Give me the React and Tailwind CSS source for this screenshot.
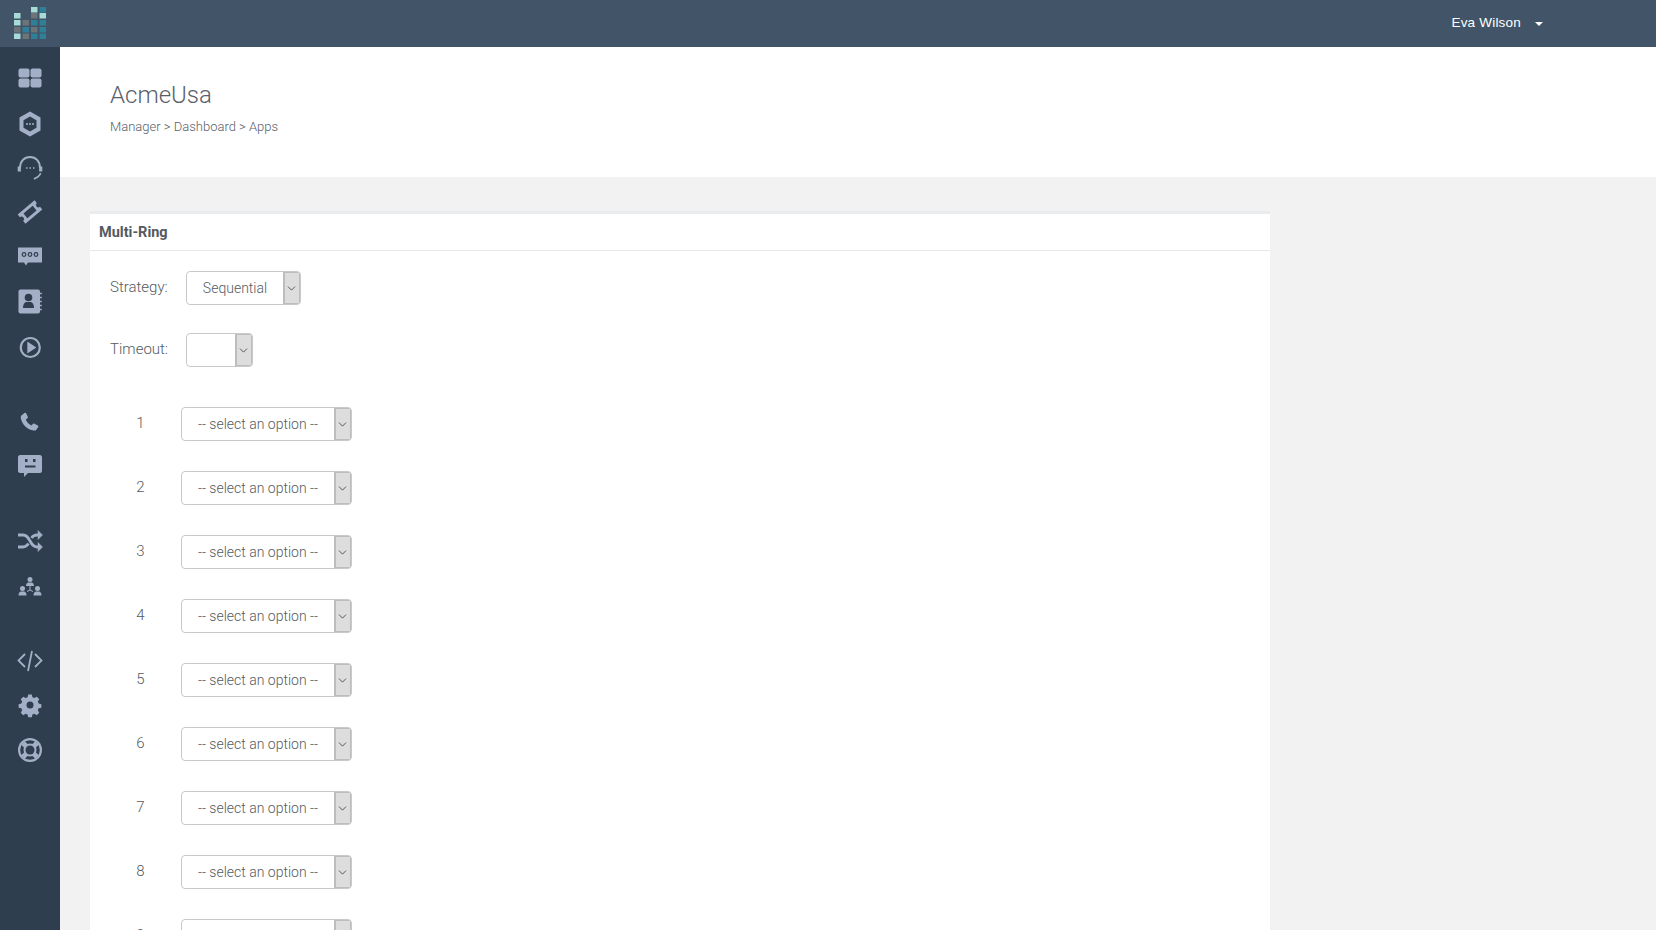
import { ChevronDown } from "lucide-react";

const light = "#a6dbd8";
const gray = "#6e7378";
const teal = "#2f7f96";

const logoCells = [
  [14, 13, light], [14, 20, light], [14, 27, gray], [14, 33.5, light],
  [22.5, 20, gray], [22.5, 27, teal], [22.5, 33.5, gray],
  [31, 7, light], [31, 13, gray], [31, 20, teal], [31, 27, gray], [31, 33.5, teal],
  [39.5, 7, teal], [39.5, 13, light], [39.5, 20, teal], [39.5, 27, teal], [39.5, 33.5, teal],
];

function Logo() {
  return (
    <svg width="60" height="47" viewBox="0 0 60 47">
      {logoCells.map(([x, y, fill]) => (
        <rect key={`${x}-${y}`} x={x} y={y} width="6.5" height="5.5" fill={fill} />
      ))}
    </svg>
  );
}

const C = "#a3afc6";
const BG = "#2f3e4e";

const icons = [
  // dashboard tiles
  <g key="a" fill={C} transform="translate(0.5 0.500)">
    <rect x="3" y="4" width="11" height="9" rx="2" /><rect x="15" y="4" width="11" height="9" rx="2" />
    <rect x="3" y="14" width="11" height="9" rx="2" /><rect x="15" y="14" width="11" height="9" rx="2" />
  </g>,
  // hexagon
  <g key="b" transform="translate(0.500 1)">
    <path d="M14.500 1.500 25 7.500v13l-10.500 6L4 20.500v-13z" fill={C} />
    <path d="M14.500 6.500 21 10.200v7.600L14.500 21.500 8 17.800v-7.600z" fill={BG} />
    <circle cx="11.500" cy="14" r="1" fill={C} /><circle cx="14.500" cy="14" r="1" fill={C} /><circle cx="17.500" cy="14" r="1" fill={C} />
  </g>,
  // headset
  <g key="c" fill="none" stroke={C} transform="translate(0.500 -1)">
    <path d="M4.500 15C4.500 8 9 4 14.500 4S24.500 8 24.500 15" strokeWidth="2" />
    <path d="M3.800 13.500v5M25.200 13.500v5" strokeWidth="3.200" />
    <path d="M25 20c0 2-2 3-3 4l-3.500 2" strokeWidth="1.600" />
    <path d="M10.500 15h1.500M14 15h1.500M17.500 15h1.500" strokeWidth="1.500" />
  </g>,
  // ticket
  <g key="d" transform="rotate(-40 15 13)">
    <path d="M4 7h22v3.500a2.500 2.500 0 0 0 0 5V19H4v-3.500a2.500 2.500 0 0 0 0-5z" fill={C} />
    <rect x="9" y="10" width="12" height="6" fill={BG} />
  </g>,
  // chat dots
  <g key="e" transform="translate(0 -1.500)">
    <path d="M3 5h24v15H13l-2 3-2-3H3z" fill={C} />
    <circle cx="9" cy="12" r="1.800" fill="none" stroke={BG} strokeWidth="1.200" />
    <circle cx="15" cy="12" r="1.800" fill="none" stroke={BG} strokeWidth="1.200" />
    <circle cx="21" cy="12" r="1.800" fill="none" stroke={BG} strokeWidth="1.200" />
  </g>,
  // address book
  <g key="f" transform="translate(0 -2)">
    <rect x="3.500" y="2.500" width="21.500" height="24" rx="2" fill={C} />
    <path d="M25 6.500h1.800M25 10.500h1.800M25 14.500h1.800M25 18.500h1.800M25 22.500h1.800" stroke={C} strokeWidth="1.500" />
    <circle cx="13.500" cy="10.500" r="3.800" fill={BG} />
    <path d="M8 21c0-4 2-6 3.500-6h4c1.500 0 3.500 2 3.500 6z" fill={BG} />
  </g>,
  // play circle
  <g key="g" transform="translate(0.300 -1)">
    <circle cx="15" cy="14.500" r="9.500" fill="none" stroke={C} strokeWidth="2.200" />
    <path d="M12 8.500 21 14.500 12 20.500z" fill={C} />
  </g>,
  // phone
  <path key="h" transform="translate(0 1.500)" d="M7 5.500 9.500 3.500c.7-.5 1.300-.3 1.600.3l1.700 3.400c.3.600.2 1.100-.3 1.500l-1.700 1.300c1 2.500 3 4.700 5.500 6l1.600-1.600c.5-.5 1-.5 1.600-.2l3.300 1.900c.6.4.7 1 .3 1.600l-1.800 2.500c-.6.800-1.500 1.100-2.600.8C12.500 20.500 7 15 5.800 8.500c-.2-1.300.3-2.300 1.200-3z" fill={C} />,
  // chat face
  <g key="i" transform="translate(0 -1.500)">
    <path d="M5 3.500h20c1 0 2 1 2 2v14c0 1-1 2-2 2H13l-4 4v-4H5c-1 0-2-1-2-2v-14c0-1 1-2 2-2z" fill={C} />
    <rect x="10" y="7.500" width="2.500" height="3" fill={BG} /><rect x="18" y="7.500" width="2.500" height="3" fill={BG} />
    <rect x="10" y="14" width="10.500" height="2" fill={BG} />
  </g>,
  // shuffle
  <g key="j" fill="none" stroke={C} strokeWidth="2.800">
    <path d="M3 8h5c4 0 5 2.500 7 6s3.500 6 7 6h2" />
    <path d="M3 20h5c3 0 4.500-2 5.500-3.500M16.500 11c1-1.500 2.500-3 5.500-3h2" />
    <path d="M23 3.500l4.500 4.500-4.500 4.500zM23 15.500l4.500 4.500-4.500 4.500z" fill={C} strokeWidth="0.500" />
  </g>,
  // org people
  <g key="k" fill={C} transform="translate(0 0.500)">
    <circle cx="15" cy="7" r="2.500" /><path d="M11 13.500c0-2.500 1.500-3.500 2.500-3.500h3c1 0 2.500 1 2.500 3.500z" />
    <circle cx="7.500" cy="16" r="2.500" /><path d="M3.500 23c0-3 1.500-4 2.500-4h3c1 0 2.500 1 2.500 4z" />
    <circle cx="22.500" cy="16" r="2.500" /><path d="M18.500 23c0-3 1.500-4 2.500-4h3c1 0 2.500 1 2.500 4z" />
    <path d="M15 13.500v4l-3 1.500M15 17.500l3 1.500" fill="none" stroke={C} strokeWidth="1" />
  </g>,
  // code
  <g key="l" fill="none" stroke={C} strokeWidth="1.800" transform="translate(0 0.500)">
    <path d="M10 7.500 3.500 14 10 20.500M20 7.500 26.500 14 20 20.500M17 4.500l-4 20" />
  </g>,
  // gear
  <g key="m" transform="translate(0 -0.500)">
    <path d="M13 3h4l.7 3 2.200.9 2.600-1.600 2.800 2.800-1.600 2.600.9 2.200 3 .7v4l-3 .7-.9 2.200 1.600 2.600-2.800 2.800-2.600-1.600-2.200.9-.7 3h-4l-.7-3-2.200-.9-2.600 1.600-2.800-2.800 1.600-2.600-.9-2.200-3-.7v-4l3-.7.9-2.200-1.600-2.600 2.800-2.800 2.600 1.600 2.200-.9z" fill={C} transform="translate(1.500 1.400) scale(0.9)" />
    <circle cx="15" cy="14.500" r="3.500" fill={BG} />
  </g>,
  // lifebuoy
  <g key="n" transform="translate(0 -0.500)">
    <circle cx="15" cy="14.500" r="12" fill={C} />
    <circle cx="15" cy="14.500" r="9.800" fill={BG} />
    <path d="M8 7.500 12 11.500M22 7.500 18 11.500M8 21.500 12 17.500M22 21.500 18 17.500" stroke={C} strokeWidth="5" />
    <circle cx="15" cy="14.500" r="6.500" fill={C} />
    <circle cx="15" cy="14.500" r="4.500" fill={BG} />
  </g>,
];

const groups = [icons.slice(0, 7), icons.slice(7, 9), icons.slice(9, 11), icons.slice(11, 14)];

function Sidebar() {
  return (
    <aside className="w-[60px] shrink-0 bg-[#2f3e4e] pt-[9px] flex flex-col gap-[29px]">
      {groups.map((group, i) => (
        <div key={i} className="flex flex-col">
          {group.map((icon, j) => (
            <div key={j} className="h-[45px] flex items-center justify-center">
              <svg width="30" height="29" viewBox="0 0 30 29">{icon}</svg>
            </div>
          ))}
        </div>
      ))}
    </aside>
  );
}

function Select({ value, className }) {
  return (
    <div className={`h-[34px] flex rounded-[4px] border border-[#c9c9c9] bg-white overflow-hidden ${className}`}>
      <div className="flex-1 text-center text-[14px] leading-[32px] text-[#555a60] font-light">{value}</div>
      <div className="w-[17px] bg-[#dddddd] border-l-2 border-r border-y border-[#bdbdbd] flex items-center justify-center">
        <ChevronDown size={13} strokeWidth={1.600} className="text-[#444] -ml-[1px]" />
      </div>
    </div>
  );
}

const rows = ["1", "2", "3", "4", "5", "6", "7", "8", "9"];

export default function App() {
  return (
    <div className="h-[930px] overflow-hidden bg-[#f2f2f2] flex flex-col font-['Roboto',sans-serif]">
      <header className="h-[47px] shrink-0 bg-[#425568] flex items-center">
        <Logo />
        <div className="ml-auto mr-[113px] flex items-center">
          <span className="text-[13.500px] tracking-[0.2px] text-white font-['Liberation_Sans',sans-serif]">Eva Wilson</span>
          <span className="ml-[14px] w-0 h-0 border-x-[4px] border-x-transparent border-t-[4px] border-t-white" />
        </div>
      </header>

      <div className="flex flex-1 min-h-0">
        <Sidebar />
        <main className="flex-1 min-w-0">
          <div className="h-[130px] bg-white pl-[50px] pt-[33px]">
            <h1 className="text-[24px] leading-[30px] font-light text-[#5a6068]">AcmeUsa</h1>
            <p className="mt-[9px] text-[13px] leading-[16px] font-light text-[#5a6068]">Manager &gt; Dashboard &gt; Apps</p>
          </div>

          <section className="mt-[34px] ml-[30px] w-[1180px] bg-white border-t-[3px] border-[#e9ebec]">
            <div className="h-[37px] border-b border-[#e8e8e8] pl-[9px] pt-[2px] flex items-center">
              <h2 className="text-[14.500px] font-bold text-[#555a60]">Multi-Ring</h2>
            </div>
            <div className="pl-[20px] pt-[20px] flex flex-col">
              <div className="flex items-start">
                <label className="w-[76px] text-[15px] leading-[32px] font-light text-[#555a60]">Strategy:</label>
                <Select value="Sequential" className="w-[115px]" />
              </div>
              <div className="flex items-start mt-[28px]">
                <label className="w-[76px] text-[15px] leading-[32px] font-light text-[#555a60]">Timeout:</label>
                <Select value="" className="w-[67px]" />
              </div>
              <div className="mt-[40px] flex flex-col gap-[30px] pb-[40px]">
                {rows.map((n) => (
                  <div key={n} className="flex items-start">
                    <span className="w-[61px] mr-[10px] text-center text-[15px] leading-[32px] font-light text-[#555a60]">{n}</span>
                    <Select value="-- select an option --" className="w-[171px]" />
                  </div>
                ))}
              </div>
            </div>
          </section>
        </main>
      </div>
    </div>
  );
}
